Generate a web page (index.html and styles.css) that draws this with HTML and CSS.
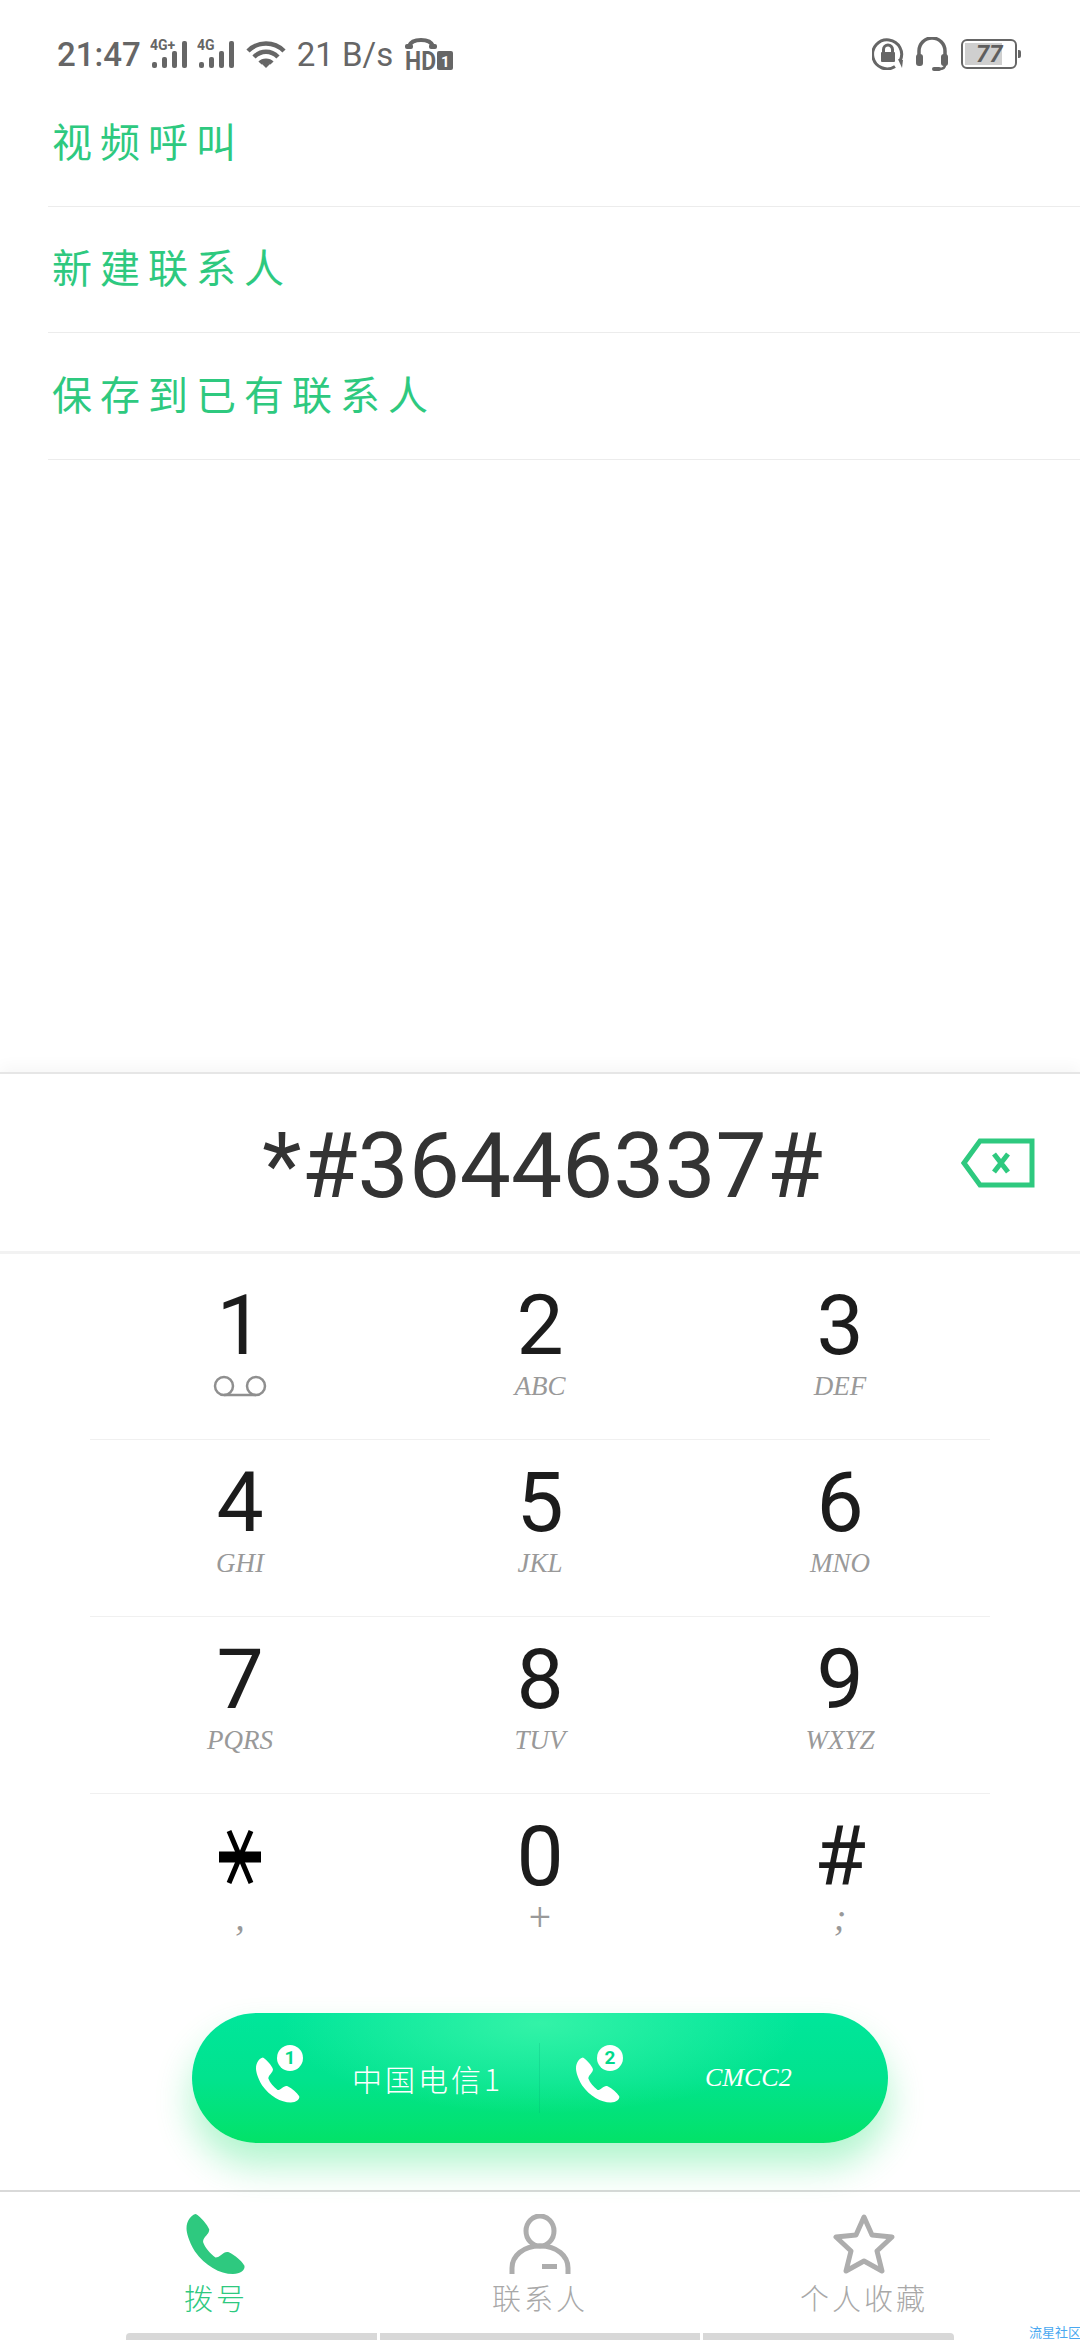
FILE: index.html
```html
<!DOCTYPE html>
<html lang="zh-CN">
<head>
  <meta charset="UTF-8">
  <meta name="viewport" content="width=device-width, initial-scale=1.0">
  <title>拨号</title>
  <link rel="stylesheet" href="styles.css">
</head>
<body>
  <div class="screen">

    <!-- Status bar -->
    <div class="status-bar">
      <div class="status-left">
        <span class="time">21:47</span>
        <svg class="icon-signal" viewBox="0 -4 42 34">
          <text class="net-label" x="0" y="11">4G+</text>
          <rect x="2" y="23" width="5" height="6" rx="2"/><rect x="12" y="18" width="5" height="11" rx="2"/><rect x="22" y="12" width="5" height="17" rx="2"/><rect x="32" y="2" width="5" height="27" rx="2"/>
        </svg>
        <svg class="icon-signal" viewBox="0 -4 42 34">
          <text class="net-label" x="0" y="11">4G</text>
          <rect x="2" y="23" width="5" height="6" rx="2"/><rect x="12" y="18" width="5" height="11" rx="2"/><rect x="22" y="12" width="5" height="17" rx="2"/><rect x="32" y="2" width="5" height="27" rx="2"/>
        </svg>
        <svg class="icon-wifi" viewBox="0 0 40 28">
          <path d="M2 11C12 1 28 1 38 11" /><path d="M8 17C15 10 25 10 32 17" /><path d="M14 23C17 20 23 20 26 23" />
          <path class="solid" d="M20 28l-4-4C18 22 22 22 24 24z"/>
        </svg>
        <span class="speed">21 B/s</span>
        <svg class="icon-hd" viewBox="0 0 48 38">
          <path class="arc" d="M4 8C7 0 25 0 28 8"/>
          <rect class="solid" x="0" y="6" width="8" height="5" rx="2"/><rect class="solid" x="24" y="6" width="8" height="5" rx="2"/>
          <text class="hd-label" x="0" y="32" textLength="31" lengthAdjust="spacingAndGlyphs">HD</text>
          <rect class="solid" x="32" y="13" width="16" height="19" rx="2"/>
          <text class="hd-num" x="36" y="29">1</text>
        </svg>
      </div>
      <div class="status-right">
        <svg class="icon-lock" viewBox="0 0 32 32">
          <path class="ring" d="M28 23A14.5 14.5 0 1 0 23 28.500"/>
          <path class="solid" d="M26 21l5 1-1 8z"/>
          <rect class="solid" x="9" y="14" width="14" height="10" rx="1"/>
          <path class="shackle" d="M11.500 14V11.500a4.500 4.500 0 0 1 9 0V14"/>
        </svg>
        <svg class="icon-headset" viewBox="0 0 32 34">
          <path class="band" d="M3 20V14a13 13 0 0 1 26 0v6"/>
          <rect class="solid" x="0" y="17" width="7" height="12" rx="3"/><rect class="solid" x="25" y="17" width="7" height="12" rx="3"/>
          <path class="band thin" d="M29 28c0 3-3 4-6 4"/>
          <rect class="solid" x="16" y="30" width="9" height="4" rx="2"/>
        </svg>
        <div class="battery">
          <div class="battery-body">
            <div class="battery-fill" style="width: 77%"></div>
            <span class="battery-num">77</span>
          </div>
          <div class="battery-nub"></div>
        </div>
      </div>
    </div>

    <!-- Suggestions -->
    <div class="actions">
      <div class="action">视频呼叫</div>
      <div class="action">新建联系人</div>
      <div class="action">保存到已有联系人</div>
    </div>

    <!-- Dial panel -->
    <div class="panel">
      <div class="number-row">
        <div class="number">*#36446337#</div>
        <svg class="icon-delete" viewBox="0 0 74 50">
          <path d="M71 3H19L3 25l16 22h52z"/>
          <path d="M33 16l14 18M47 16L33 34"/>
        </svg>
      </div>

      <div class="keypad">
        <div class="key-row">
          <div class="key">
            <div class="digit">1</div>
            <div class="sub">
              <svg class="icon-voicemail" viewBox="0 0 54 22">
                <circle cx="11" cy="11" r="9"/><circle cx="43" cy="11" r="9"/><path d="M11 20h32"/>
              </svg>
            </div>
          </div>
          <div class="key"><div class="digit">2</div><div class="sub">ABC</div></div>
          <div class="key"><div class="digit">3</div><div class="sub">DEF</div></div>
        </div>
        <div class="key-row">
          <div class="key"><div class="digit">4</div><div class="sub">GHI</div></div>
          <div class="key"><div class="digit">5</div><div class="sub">JKL</div></div>
          <div class="key"><div class="digit">6</div><div class="sub">MNO</div></div>
        </div>
        <div class="key-row">
          <div class="key"><div class="digit">7</div><div class="sub">PQRS</div></div>
          <div class="key"><div class="digit">8</div><div class="sub">TUV</div></div>
          <div class="key"><div class="digit">9</div><div class="sub">WXYZ</div></div>
        </div>
        <div class="key-row last">
          <div class="key">
            <div class="digit">
              <svg class="icon-star-key" viewBox="0 0 42 54">
                <path d="M0 27h42" class="bar"/><path d="M10 1l22 52M32 1L10 53"/>
              </svg>
            </div>
            <div class="sub sym">,</div>
          </div>
          <div class="key"><div class="digit">0</div><div class="sub sym plus">+</div></div>
          <div class="key"><div class="digit">#</div><div class="sub sym">;</div></div>
        </div>
      </div>

      <!-- Call button -->
      <div class="call-area">
        <div class="call-btn">
          <div class="sim">
            <div class="sim-icon">
              <svg class="icon-phone" viewBox="0 0 57 58">
                <path d="M9 0C14 3 20 10 22 15C22 20 16 22 16 27C18 33 23 38 28 42C33 42 36 35 41 37C47 40 53 45 56 50C57 54 52 58 45 58C32 58 18 50 8 36C2 26 0 18 0 14C0 7 4 1 9 0Z"/>
              </svg>
              <span class="sim-badge">1</span>
            </div>
            <span class="sim-name">中国电信1</span>
          </div>
          <div class="call-divider"></div>
          <div class="sim second">
            <div class="sim-icon">
              <svg class="icon-phone" viewBox="0 0 57 58">
                <path d="M9 0C14 3 20 10 22 15C22 20 16 22 16 27C18 33 23 38 28 42C33 42 36 35 41 37C47 40 53 45 56 50C57 54 52 58 45 58C32 58 18 50 8 36C2 26 0 18 0 14C0 7 4 1 9 0Z"/>
              </svg>
              <span class="sim-badge">2</span>
            </div>
            <span class="sim-name latin">CMCC2</span>
          </div>
        </div>
      </div>

      <!-- Bottom tabs -->
      <div class="tabs">
        <div class="tab active">
          <svg class="tab-icon" viewBox="0 0 57 58">
            <path class="solid" d="M9 0C14 3 20 10 22 15C22 20 16 22 16 27C18 33 23 38 28 42C33 42 36 35 41 37C47 40 53 45 56 50C57 54 52 58 45 58C32 58 18 50 8 36C2 26 0 18 0 14C0 7 4 1 9 0Z"/>
          </svg>
          <span class="tab-label">拨号</span>
        </div>
        <div class="tab">
          <svg class="tab-icon" viewBox="0 0 62 60">
            <ellipse cx="31" cy="17" rx="14" ry="15"/>
            <path d="M3 60V54C3 42 14 32 31 32S59 42 59 54V60"/>
            <rect class="solid" x="33" y="50" width="15" height="5"/>
          </svg>
          <span class="tab-label">联系人</span>
        </div>
        <div class="tab">
          <svg class="tab-icon" viewBox="0 0 62 60">
            <path class="round" d="M31 3l8 18 20 2-15 14 5 20-18-10-18 10 5-20L3 23l20-2z"/>
          </svg>
          <span class="tab-label">个人收藏</span>
        </div>
      </div>

      <!-- Gesture bar -->
      <div class="gesture-bar">
        <div class="gesture seg-a"></div>
        <div class="gesture seg-b"></div>
        <div class="gesture seg-c"></div>
        <span class="watermark">流星社区</span>
      </div>
    </div>
  </div>
</body>
</html>
```

FILE: styles.css
```css
* {
  box-sizing: border-box;
}
html, body {
  margin: 0;
  padding: 0;
  background-color: #ffffff;
}
body {
  font-family: Roboto, "Noto Sans CJK SC", sans-serif;
  color: #333;
}
.screen {
  width: 1080px;
  height: 2340px;
  overflow: hidden;
  display: flex;
  flex-direction: column;
}

/* status bar */
.status-bar {
  height: 80px;
  padding: 28px 59px 0 57px;
  display: flex;
  justify-content: space-between;
  align-items: center;
  color: #666;
  fill: #666;
}
.status-left, .status-right {
  display: flex;
  align-items: center;
}
.time {
  font-size: 33px;
  font-weight: 500;
  margin-right: 9px;
}
.speed {
  font-size: 33px;
  margin: 0 12px 0 11px;
}
.icon-signal {
  width: 42px;
  height: 34px;
  margin-right: 5px;
  margin-bottom: 4px;
}
.net-label {
  font: 700 14px Roboto, sans-serif;
}
.icon-wifi {
  width: 40px;
  height: 28px;
  margin-left: 2px;
  fill: none;
  stroke: #666;
  stroke-width: 4.500;
}
.icon-wifi .solid {
  fill: #666;
  stroke: none;
}
.icon-hd {
  width: 48px;
  height: 38px;
  margin-top: 6px;
}
.icon-hd .arc {
  fill: none;
  stroke: #666;
  stroke-width: 4;
}
.hd-label {
  font: 700 25px Roboto, sans-serif;
}
.hd-num {
  font: 700 15px Roboto, sans-serif;
  fill: #fff;
}
.icon-lock {
  width: 32px;
  height: 32px;
  margin-right: 12px;
}
.icon-lock .ring {
  fill: none;
  stroke: #666;
  stroke-width: 3;
}
.icon-lock .shackle {
  fill: none;
  stroke: #666;
  stroke-width: 3;
}
.icon-headset {
  width: 32px;
  height: 34px;
  margin-right: 13px;
}
.icon-headset .band {
  fill: none;
  stroke: #666;
  stroke-width: 3.500;
}
.icon-headset .thin {
  stroke-width: 2.500;
}
.battery {
  display: flex;
  align-items: center;
}
.battery-body {
  position: relative;
  width: 56px;
  height: 30px;
  border: 2px solid #666;
  border-radius: 6px;
  padding: 2px;
  background-color: #fff;
}
.battery-fill {
  height: 100%;
  background-color: #cfcfcf;
}
.battery-num {
  position: absolute;
  left: 13px;
  top: 0;
  font-size: 24px;
  line-height: 26px;
  font-weight: 700;
  font-style: italic;
  color: #5e5e5e;
}
.battery-nub {
  width: 3px;
  height: 8px;
  margin-left: 1px;
  background-color: #666;
  border-radius: 0 2px 2px 0;
}

/* suggestions */
.actions {
  height: 380px;
  margin-left: 48px;
}
.action {
  height: 126.500px;
  padding: 0 0 6px 4px;
  display: flex;
  align-items: center;
  border-bottom: 1px solid #ececec;
  font-family: "Noto Sans CJK SC", sans-serif;
  font-weight: 400;
  font-size: 40px;
  letter-spacing: 8px;
  color: #2ec97f;
}

/* dial panel */
.panel {
  margin-top: 612px;
  border-top: 2px solid #e6e6e6;
  box-shadow: 0 -6px 14px rgba(0, 0, 0, 0.035);
  background-color: #fff;
  flex: 1;
  display: flex;
  flex-direction: column;
}
.number-row {
  height: 180px;
  display: grid;
  grid-template-columns: 1fr auto 1fr;
  align-items: center;
  border-bottom: 3px solid #f2f2f2;
}
.number {
  grid-column: 2;
  font-size: 91px;
  color: #333;
  margin-left: 5px;
  padding-top: 6px;
}
.icon-delete {
  grid-column: 3;
  justify-self: end;
  width: 74px;
  height: 50px;
  margin-right: 45px;
  fill: none;
  stroke: #2ec97f;
  stroke-width: 5;
}

/* keypad */
.keypad {
  padding: 9px 90px 0;
}
.key-row {
  height: 177px;
  display: grid;
  grid-template-columns: repeat(3, 1fr);
  border-bottom: 1px solid #f0f0f0;
}
.key-row.last {
  border-bottom: none;
}
.key {
  padding-top: 26px;
  text-align: center;
}
.digit {
  height: 74px;
  line-height: 74px;
  font-size: 84px;
  color: #1c1c1c;
  display: flex;
  justify-content: center;
  align-items: center;
}
.sub {
  height: 46px;
  line-height: 46px;
  font-family: "Liberation Serif", serif;
  font-style: italic;
  font-size: 27px;
  color: #999;
  display: flex;
  justify-content: center;
  align-items: center;
}
.sub.sym {
  font-size: 38px;
}
.sub.plus {
  font-family: Roboto, sans-serif;
  font-style: normal;
  font-weight: 300;
}
.icon-voicemail {
  width: 54px;
  height: 22px;
  fill: none;
  stroke: #8f8f8f;
  stroke-width: 2.500;
}
.icon-star-key {
  width: 42px;
  height: 54px;
  fill: none;
  stroke: #000;
  stroke-width: 5;
}
.icon-star-key .bar {
  stroke-width: 11;
}

/* call button */
.call-area {
  height: 221px;
  padding-top: 42px;
  display: flex;
  justify-content: center;
  align-items: flex-start;
  border-bottom: 2px solid #d9d9d9;
}
.call-btn {
  width: 696px;
  height: 130px;
  border-radius: 65px;
  display: flex;
  align-items: center;
  color: #fff;
  background:
    radial-gradient(ellipse 260px 90px at 50% 8%, rgba(60, 245, 170, 0.85), rgba(60, 245, 170, 0) 100%),
    linear-gradient(180deg, #00e69b 0%, #01e38e 50%, #03e268 100%);
  box-shadow: 0 22px 36px rgba(10, 225, 100, 0.32);
}
.sim {
  flex: 0 0 347px;
  height: 100%;
  padding-left: 64px;
  display: flex;
  align-items: center;
}
.sim.second {
  padding-left: 36px;
}
.call-divider {
  width: 1px;
  height: 70px;
  background-color: rgba(0, 160, 110, 0.2);
}
.sim-icon {
  position: relative;
  width: 44px;
  height: 46px;
  margin-top: 3px;
}
.icon-phone {
  width: 44px;
  height: 46px;
  fill: #fff;
  display: block;
}
.sim-badge {
  position: absolute;
  left: 21px;
  top: -12px;
  width: 26px;
  height: 26px;
  border-radius: 50%;
  background-color: #fff;
  color: #01d98c;
  font-size: 19px;
  font-weight: 700;
  line-height: 26px;
  text-align: center;
}
.sim-name {
  margin-left: 52px;
  font-family: "Noto Sans CJK SC", sans-serif;
  font-weight: 300;
  font-size: 30px;
  letter-spacing: 3px;
  white-space: nowrap;
}
.sim-name.latin {
  margin-left: 85px;
  font-family: "Liberation Serif", serif;
  font-style: italic;
  font-size: 26px;
  letter-spacing: 0;
}

/* tabs */
.tabs {
  height: 141px;
  padding: 22px 54px 0;
  display: grid;
  grid-template-columns: repeat(3, 1fr);
}
.tab {
  display: flex;
  flex-direction: column;
  align-items: center;
  color: #a8a8a8;
}
.tab-icon {
  width: 62px;
  height: 60px;
  fill: none;
  stroke: #adadad;
  stroke-width: 5;
}
.tab-icon .solid {
  fill: #adadad;
  stroke: none;
}
.tab-icon .round {
  stroke-linejoin: round;
}
.tab.active .tab-icon .solid {
  fill: #2ec97f;
}
.tab-label {
  margin-top: 6px;
  font-family: "Noto Sans CJK SC", sans-serif;
  font-weight: 300;
  font-size: 29px;
  letter-spacing: 3px;
  line-height: 34px;
}
.tab.active {
  color: #2ec97f;
}

/* gesture bar */
.gesture-bar {
  position: relative;
  height: 7px;
  display: flex;
  gap: 3px;
  padding-left: 126px;
}
.gesture {
  height: 7px;
  background-color: #d8d8d8;
}
.seg-a {
  width: 251px;
  border-radius: 4px 0 0 0;
}
.seg-b {
  width: 320px;
}
.seg-c {
  width: 251px;
  border-radius: 0 4px 0 0;
}
.watermark {
  position: absolute;
  left: 1029px;
  top: -10px;
  font-family: "Noto Sans CJK SC", sans-serif;
  font-size: 13px;
  line-height: 17px;
  color: #4aa8f0;
  white-space: nowrap;
}
```
